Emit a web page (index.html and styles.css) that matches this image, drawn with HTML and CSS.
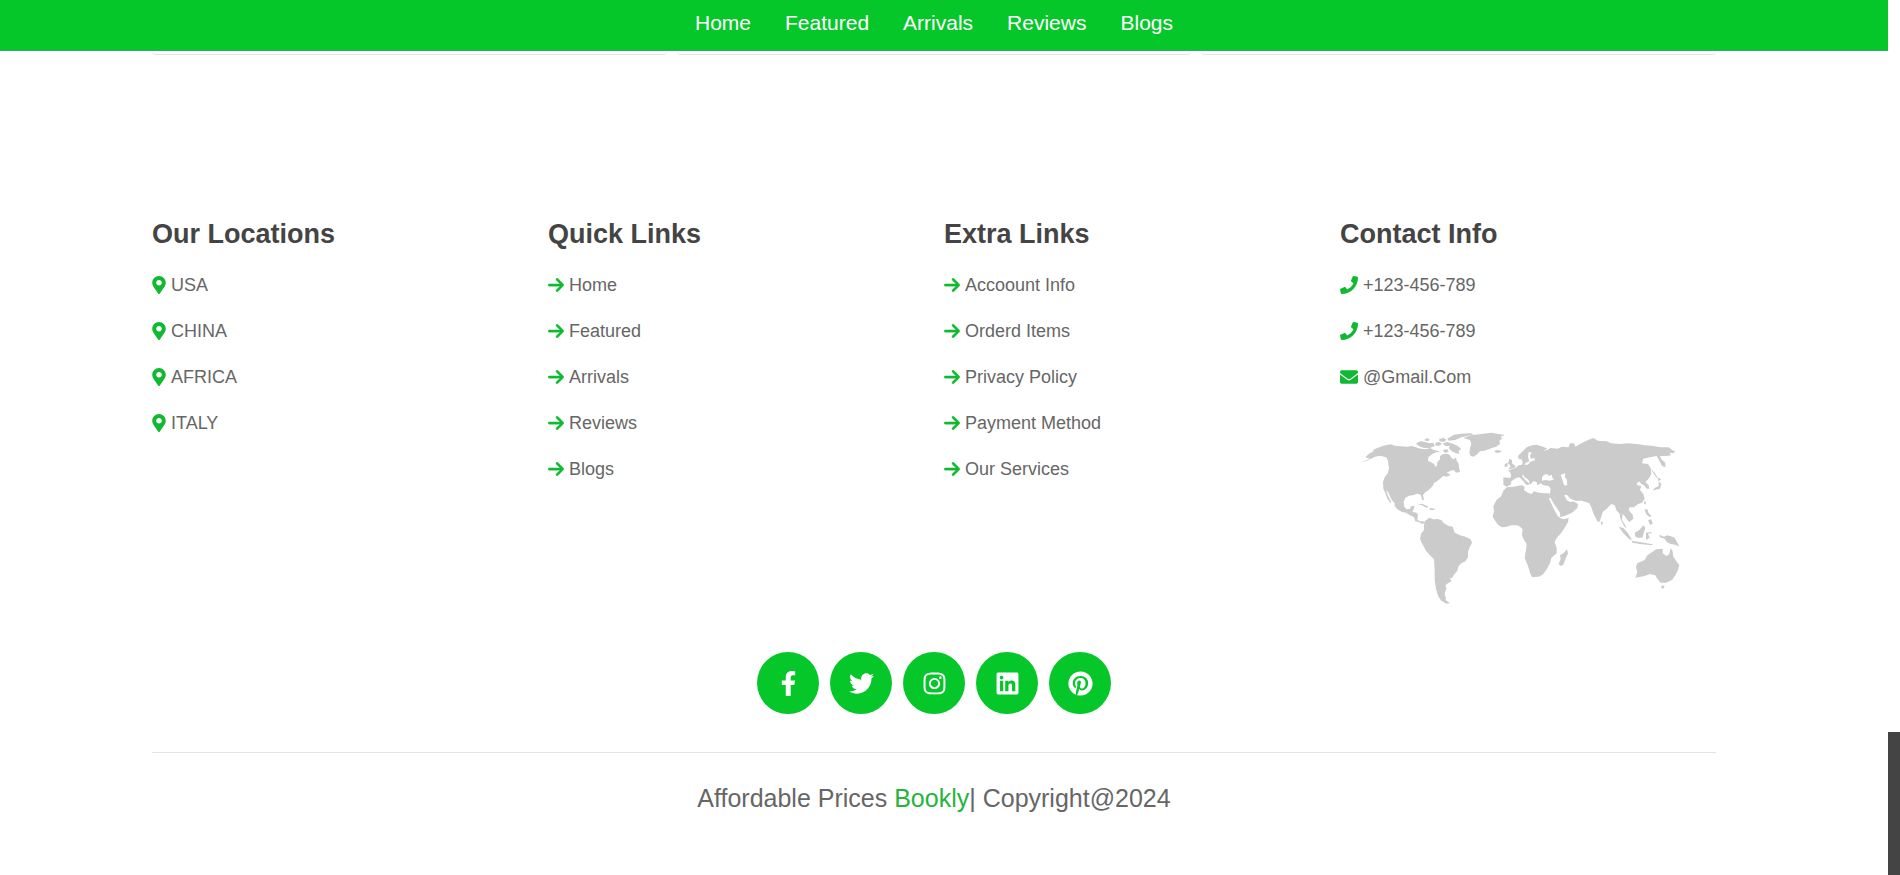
FILE: index.html
```html
<!DOCTYPE html>
<html lang="en">
<head>
    <meta charset="UTF-8">
    <meta name="viewport" content="width=device-width, initial-scale=1.0">
    <title>Bookly</title>
    <link rel="stylesheet" href="styles.css">
</head>
<body>
<!-- icons -->
<svg class="sprite" aria-hidden="true">
    <symbol id="marker" viewBox="0 0 384 512"><path d="M172.268 501.67C26.97 291.031 0 269.413 0 192 0 85.961 85.961 0 192 0s192 85.961 192 192c0 77.413-26.97 99.031-172.268 309.67-9.535 13.774-29.93 13.773-39.464 0zM192 272c44.183 0 80-35.817 80-80s-35.817-80-80-80-80 35.817-80 80 35.817 80 80 80z"/></symbol>
    <symbol id="arrow" viewBox="0 0 448 512"><path d="M438.6 278.6c12.5-12.5 12.5-32.8 0-45.3l-160-160c-12.5-12.5-32.8-12.5-45.3 0s-12.5 32.8 0 45.3L338.8 224 32 224c-17.7 0-32 14.3-32 32s14.3 32 32 32l306.7 0L233.4 393.4c-12.5 12.5-12.5 32.8 0 45.3s32.8 12.5 45.3 0l160-160z"/></symbol>
    <symbol id="phone" viewBox="0 0 512 512"><path d="M493.4 24.6l-104-24c-11.3-2.6-22.9 3.3-27.5 13.9l-48 112c-4.2 9.8-1.4 21.3 6.9 28l60.6 49.6c-36 76.7-98.9 140.5-177.2 177.2l-49.6-60.6c-6.8-8.3-18.2-11.1-28-6.9l-112 48C3.9 366.5-2 378.1.6 389.4l24 104C27.1 504.2 36.7 512 48 512c256.1 0 464-207.5 464-464 0-11.2-7.7-20.9-18.6-23.4z"/></symbol>
    <symbol id="envelope" viewBox="0 0 512 512"><path d="M502.3 190.8c3.9-3.1 9.7-.2 9.7 4.7V400c0 26.5-21.5 48-48 48H48c-26.5 0-48-21.5-48-48V195.6c0-5 5.7-7.8 9.7-4.7 22.4 17.4 52.1 39.5 154.1 113.6 21.1 15.4 56.7 47.8 92.2 47.6 35.7.3 72-32.8 92.3-47.6 102-74.1 131.6-96.3 154-113.7zM256 320c23.2.4 56.6-29.2 73.4-41.4 132.7-96.3 142.8-104.7 173.4-128.7 5.8-4.5 9.2-11.5 9.2-18.9v-19c0-26.5-21.5-48-48-48H48c-26.5 0-48 21.5-48 48v19c0 7.4 3.4 14.3 9.2 18.9 30.6 23.9 40.7 32.4 173.4 128.7 16.8 12.2 50.2 41.8 73.4 41.4z"/></symbol>
    <symbol id="facebook" viewBox="0 0 320 512"><path d="M279.14 288l14.22-92.66h-88.91v-60.13c0-25.35 12.42-50.06 52.24-50.06h40.42V6.26S260.43 0 225.36 0c-73.22 0-121.08 44.38-121.08 124.72v70.62H22.89V288h81.39v224h100.17V288z"/></symbol>
    <symbol id="twitter" viewBox="0 0 512 512"><path d="M459.37 151.716c.325 4.548.325 9.097.325 13.645 0 138.72-105.583 298.558-298.558 298.558-59.452 0-114.68-17.219-161.137-47.106 8.447.974 16.568 1.299 25.34 1.299 49.055 0 94.213-16.568 130.274-44.832-46.132-.975-84.792-31.188-98.112-72.772 6.498.974 12.995 1.624 19.818 1.624 9.421 0 18.843-1.3 27.614-3.573-48.081-9.747-84.143-51.98-84.143-102.985v-1.299c13.969 7.797 30.214 12.67 47.431 13.319-28.264-18.843-46.781-51.005-46.781-87.391 0-19.492 5.197-37.36 14.294-52.954 51.655 63.675 129.3 105.258 216.365 109.807-1.624-7.797-2.599-15.918-2.599-24.04 0-57.828 46.782-104.934 104.934-104.934 30.213 0 57.502 12.67 76.67 33.137 23.715-4.548 46.456-13.32 66.599-25.34-7.798 24.366-24.366 44.833-46.132 57.827 21.117-2.273 41.584-8.122 60.426-16.243-14.292 20.791-32.161 39.308-52.628 54.253z"/></symbol>
    <symbol id="instagram" viewBox="0 0 448 512"><path d="M224.1 141c-63.6 0-114.9 51.3-114.9 114.9s51.3 114.9 114.9 114.9S339 319.5 339 255.9 287.7 141 224.1 141zm0 189.6c-41.1 0-74.7-33.5-74.7-74.7s33.5-74.7 74.7-74.7 74.7 33.5 74.7 74.7-33.6 74.7-74.7 74.7zm146.4-194.3c0 14.9-12 26.8-26.8 26.8-14.9 0-26.8-12-26.8-26.8s12-26.8 26.8-26.8 26.8 12 26.8 26.8zm76.1 27.2c-1.7-35.9-9.9-67.7-36.2-93.9-26.2-26.2-58-34.4-93.9-36.2-37-2.1-147.9-2.1-184.9 0-35.8 1.7-67.6 9.9-93.9 36.1s-34.4 58-36.2 93.9c-2.1 37-2.1 147.9 0 184.9 1.7 35.9 9.9 67.7 36.2 93.9s58 34.4 93.9 36.2c37 2.1 147.9 2.1 184.9 0 35.9-1.7 67.7-9.9 93.9-36.2 26.2-26.2 34.4-58 36.2-93.9 2.1-37 2.1-147.8 0-184.8zM398.8 388c-7.8 19.6-22.9 34.7-42.6 42.6-29.5 11.7-99.5 9-132.1 9s-102.7 2.6-132.1-9c-19.6-7.8-34.7-22.9-42.6-42.6-11.7-29.5-9-99.5-9-132.1s-2.6-102.7 9-132.1c7.8-19.6 22.9-34.7 42.6-42.6 29.5-11.7 99.5-9 132.1-9s102.7-2.6 132.1 9c19.6 7.8 34.7 22.9 42.6 42.6 11.7 29.5 9 99.5 9 132.1s2.7 102.7-9 132.1z"/></symbol>
    <symbol id="linkedin" viewBox="0 0 448 512"><path d="M416 32H31.9C14.3 32 0 46.5 0 64.3v383.4C0 465.5 14.3 480 31.9 480H416c17.6 0 32-14.5 32-32.3V64.3c0-17.8-14.4-32.3-32-32.3zM135.4 416H69V202.2h66.5V416zm-33.2-243c-21.3 0-38.5-17.3-38.5-38.5S80.9 96 102.2 96c21.2 0 38.5 17.3 38.5 38.5 0 21.3-17.2 38.5-38.5 38.5zm282.1 243h-66.4V312c0-24.8-.5-56.7-34.5-56.7-34.6 0-39.9 27-39.9 54.9V416h-66.4V202.2h63.7v29.2h.9c8.9-16.8 30.6-34.5 62.9-34.5 67.2 0 79.7 44.3 79.7 101.9V416z"/></symbol>
    <symbol id="pinterest" viewBox="0 0 496 512"><path d="M496 256c0 137-111 248-248 248-25.6 0-50.2-3.9-73.4-11.1 10.1-16.5 25.2-43.5 30.8-65 3-11.6 15.4-59 15.4-59 8.1 15.4 31.7 28.5 56.8 28.5 74.8 0 128.7-68.8 128.7-154.3 0-81.9-66.9-143.2-152.9-143.2-107 0-163.9 71.8-163.9 150.1 0 36.4 19.4 81.7 50.3 96.1 4.7 2.2 7.2 1.2 8.3-3.3.8-3.4 5-20.3 6.9-28.1.6-2.5.3-4.7-1.7-7.1-10.1-12.5-18.3-35.3-18.3-56.6 0-54.7 41.4-107.6 112-107.6 60.9 0 103.6 41.5 103.6 100.9 0 67.1-33.9 113.6-78 113.6-24.3 0-42.6-20.1-36.7-44.8 7-29.5 20.5-61.3 20.5-82.6 0-19-10.2-34.9-31.4-34.9-24.9 0-44.9 25.7-44.9 60.2 0 22 7.4 36.8 7.4 36.8s-24.5 103.8-29 123.2c-5 21.4-3 51.6-.9 71.2C65.4 450.9 0 361.1 0 256 0 119 111 8 248 8s248 111 248 248z"/></symbol>
</svg>

<nav class="navbar">
    <a href="#home">Home</a>
    <a href="#featured">Featured</a>
    <a href="#arrivals">Arrivals</a>
    <a href="#reviews">Reviews</a>
    <a href="#blogs">Blogs</a>
</nav>

<!-- bottom of the blog cards -->
<section class="blogs" id="blogs">
    <div class="card"></div>
    <div class="card"></div>
    <div class="card"></div>
</section>

<footer class="footer">
    <div class="box-container">
        <div class="box">
            <h3>Our Locations</h3>
            <a href="#"><svg class="icon narrow"><use href="#marker"/></svg>USA</a>
            <a href="#"><svg class="icon narrow"><use href="#marker"/></svg>CHINA</a>
            <a href="#"><svg class="icon narrow"><use href="#marker"/></svg>AFRICA</a>
            <a href="#"><svg class="icon narrow"><use href="#marker"/></svg>ITALY</a>
        </div>
        <div class="box">
            <h3>Quick Links</h3>
            <a href="#"><svg class="icon medium"><use href="#arrow"/></svg>Home</a>
            <a href="#"><svg class="icon medium"><use href="#arrow"/></svg>Featured</a>
            <a href="#"><svg class="icon medium"><use href="#arrow"/></svg>Arrivals</a>
            <a href="#"><svg class="icon medium"><use href="#arrow"/></svg>Reviews</a>
            <a href="#"><svg class="icon medium"><use href="#arrow"/></svg>Blogs</a>
        </div>
        <div class="box">
            <h3>Extra Links</h3>
            <a href="#"><svg class="icon medium"><use href="#arrow"/></svg>Accoount Info</a>
            <a href="#"><svg class="icon medium"><use href="#arrow"/></svg>Orderd Items</a>
            <a href="#"><svg class="icon medium"><use href="#arrow"/></svg>Privacy Policy</a>
            <a href="#"><svg class="icon medium"><use href="#arrow"/></svg>Payment Method</a>
            <a href="#"><svg class="icon medium"><use href="#arrow"/></svg>Our Services</a>
        </div>
        <div class="box">
            <h3>Contact Info</h3>
            <a href="#"><svg class="icon"><use href="#phone"/></svg>+123-456-789</a>
            <a href="#"><svg class="icon"><use href="#phone"/></svg>+123-456-789</a>
            <a href="#"><svg class="icon"><use href="#envelope"/></svg>@Gmail.Com</a>
            <svg class="map" viewBox="-30 0 1128 600" role="img" aria-label="World map">
                <!-- north america -->
                <path d="M26 130L48 121 60 116 46 112 56 102 72 93 68 90 84 83 100 77 122 73 134 77 152 79 172 80 184 78 198 82 212 86 228 88 240 84 252 90 262 92 270 96 258 97 246 103 235 112 234 122 246 128 252 132 256 140 261 138 262 126 270 118 270 108 280 102 292 101 300 106 304 114 312 118 318 112 320 122 326 132 327 142 330 156 318 158 312 150 302 152 290 158 298 162 302 165 290 170 280 168 270 176 258 186 252 188 248 198 236 210 224 218 219 226 222 240 217 240 212 224 200 221 192 225 178 227 166 233 161 246 163 260 170 268 180 266 184 258 194 258 190 270 187 276 200 278 204 284 202 298 208 304 220 304 226 308 216 312 206 306 196 304 192 292 180 286 168 278 156 276 142 268 134 258 134 250 124 238 114 216 108 210 114 228 124 246 122 250 112 236 106 220 100 206 99 186 104 172 114 158 117 144 114 124 110 113 98 109 84 108 72 112 56 120z"/>
                <!-- arctic islands -->
                <path d="M198 70L212 64 226 66 238 70 250 68 254 78 240 84 222 84 206 78zM222 60L232 54 240 60 232 64zM268 56L282 54 290 60 280 66 268 64zM256 68L268 66 276 72 266 78 256 76zM278 70L292 66 310 72 324 78 334 88 326 92 328 102 314 98 304 92 296 84 300 78 286 78zM278 90L292 88 296 96 284 98zM292 56L312 44 334 41 362 40 372 43 350 48 334 52 316 60 296 62z"/>
                <!-- greenland, iceland -->
                <path d="M340 54L362 46 394 42 424 38 464 45 452 50 456 56 448 62 450 72 438 80 420 86 404 92 390 94 380 104 370 110 362 108 358 98 360 84 364 72 360 60zM432 93L442 90 456 93 448 98 438 98z"/>
                <!-- caribbean -->
                <path d="M203 253L216 251 236 260 230 263 216 256zM240 264L256 266 250 270 238 269z"/>
                <!-- south america -->
                <path d="M224 304L238 293 250 298 262 297 274 300 282 310 296 318 308 320 314 338 330 346 346 350 362 358 366 368 358 384 354 396 354 412 346 424 334 430 326 438 322 452 312 464 306 474 300 474 304 484 294 490 286 496 290 506 286 512 284 524 288 534 286 540 300 549 290 551 274 542 264 528 258 506 254 480 254 450 252 418 240 406 228 392 216 370 210 356 214 340 222 330 222 316z"/>
                <!-- africa -->
                <path d="M470 202L490 200 516 196 524 200 522 210 534 218 544 222 552 214 566 218 584 220 598 220 602 238 612 260 622 276 630 294 640 298 656 294 654 306 646 320 634 338 620 354 614 366 620 384 620 400 604 414 600 430 590 448 578 464 566 470 546 472 540 458 534 438 524 414 528 390 530 372 522 360 516 346 518 328 512 322 502 316 484 316 470 320 456 322 444 314 434 300 428 290 432 274 430 258 440 240 454 228 460 212zM651 388L654 400 646 418 640 434 632 438 626 432 632 416 630 406 640 400z"/>
                <!-- europe and asia -->
                <path d="M460 172L480 174 484 166 480 156 474 152 484 148 496 144 506 136 516 134 518 126 514 118 506 116 504 108 518 94 530 82 546 76 560 74 580 80 592 86 580 92 592 90 602 84 622 86 636 80 656 82 660 70 672 70 676 80 690 72 706 64 720 58 730 54 744 62 770 64 784 70 810 72 832 70 860 72 884 76 910 78 932 82 956 82 966 90 976 94 970 100 958 98 964 106 948 108 930 108 934 118 946 128 946 142 936 138 928 122 920 108 900 112 880 116 876 130 894 132 902 144 904 162 896 176 886 186 896 196 898 206 890 206 882 196 874 192 868 184 860 190 862 196 874 198 870 210 880 222 884 236 876 248 864 252 852 262 838 262 836 270 848 284 850 296 838 306 832 300 824 288 818 282 816 300 826 316 830 326 822 318 812 298 808 280 800 272 794 256 784 252 770 266 758 276 754 290 748 306 742 304 730 280 724 262 718 250 708 246 694 242 676 242 662 236 650 224 642 226 652 242 662 246 670 244 684 252 682 264 666 278 644 288 630 292 618 270 606 248 598 234 600 220 602 206 596 198 580 196 572 190 562 196 560 186 550 184 540 194 536 180 524 172 520 164 516 168 528 182 540 192 530 196 520 184 508 172 498 174 484 184 482 194 470 200 460 194z"/>
                <!-- british isles -->
                <path d="M478 116L486 120 486 130 496 138 494 144 474 148 482 138 474 130zM464 132L472 128 474 138 464 142z"/>
                <!-- baltic, black, caspian and red seas -->
                <path class="sea" d="M536 96L546 98 540 106 542 116 552 114 556 120 540 126 534 134 522 134 528 128 538 124 534 112zM576 172L582 164 592 162 596 168 606 164 606 172 612 178 600 182 588 180 576 182zM632 164L646 160 644 170 650 178 652 196 642 196 638 182zM596 234L602 234 612 252 630 278 631 290 624 290 612 268z"/>
                <!-- asian islands -->
                <path d="M902 146L914 158 922 172 920 174 908 156zM922 172L934 178 926 184zM926 184L934 192 930 206 914 210 908 212 914 204 926 198zM884 242L888 246 886 254 882 250zM884 268L892 268 896 280 904 288 900 292 890 284 886 276zM894 300L904 298 908 312 900 314zM752 302L760 310 754 316zM806 320L820 324 834 340 846 360 838 358 822 342zM844 362L868 366 908 373 906 376 870 372 848 368zM854 338L868 330 880 316 886 324 882 336 878 352 866 354 856 350zM888 338L906 336 904 340 894 341 900 356 894 354 892 360 888 356z"/>
                <!-- new guinea, australia -->
                <path d="M928 344L942 350 952 346 972 352 980 364 988 380 976 374 962 372 950 366 944 356 930 352zM862 430L884 420 892 406 910 394 918 388 938 386 938 400 950 408 958 402 962 384 968 394 970 410 978 422 988 436 984 450 976 466 966 480 948 488 932 488 922 476 916 466 900 462 884 468 864 472 856 474 862 456 858 440zM934 497L944 497 940 506 934 504z"/>
            </svg>
        </div>
    </div>

    <div class="share">
        <a href="#" aria-label="Facebook"><svg><use href="#facebook"/></svg></a>
        <a href="#" aria-label="Twitter"><svg><use href="#twitter"/></svg></a>
        <a href="#" aria-label="Instagram"><svg><use href="#instagram"/></svg></a>
        <a href="#" aria-label="LinkedIn"><svg><use href="#linkedin"/></svg></a>
        <a href="#" aria-label="Pinterest"><svg><use href="#pinterest"/></svg></a>
    </div>

    <div class="credit">Affordable Prices <span>Bookly</span>| Copyright@2024</div>
</footer>

<div class="scroll-thumb"></div>
</body>
</html>
```

FILE: styles.css
```css
*{
    margin: 0;
    padding: 0;
    box-sizing: border-box;
}
body{
    font-family: "Liberation Sans", Arial, sans-serif;
    background: #fff;
    padding-right: 12px; /* room for the scrollbar */
}
a{
    text-decoration: none;
}
.sprite{
    display: none;
}
.navbar{
    display: flex;
    justify-content: center;
    gap: 34px;
    padding: 11px 20px 15px 0;
    background: #06c729;
    border-bottom: 1px solid #27ae60;
}
.navbar a{
    color: #fff;
    font-size: 21px;
    line-height: 24px;
}
.blogs{
    display: grid;
    grid-template-columns: repeat(3, 1fr);
    gap: 10px;
    padding: 0 172px 0 152px;
}
.blogs .card{
    height: 4px;
    border-bottom: 1px solid #e3e3e3;
    border-radius: 0 0 5px 5px;
}
.footer{
    padding: 161px 172px 0 152px;
}
.box-container{
    display: grid;
    grid-template-columns: repeat(auto-fit, minmax(300px, 1fr));
    gap: 20px;
}
.box h3{
    color: #444;
    font-size: 27px;
    line-height: 36px;
    padding-bottom: 10px;
}
.box a{
    display: flex;
    align-items: center;
    color: #666;
    font-size: 18px;
    line-height: 26px;
    padding: 10px 0;
}
.icon{
    width: 18px;
    height: 18px;
    margin-right: 5px;
    fill: #10b931;
}
.icon.narrow{
    width: 14px;
}
.icon.medium{
    width: 16px;
    stroke: #10b931;
    stroke-width: 12px;
}
.map{
    display: block;
    width: 100%;
    margin-top: 20px;
    fill: #cbcbcb;
}
.map .sea{
    fill: #fff;
}
.share{
    display: flex;
    justify-content: center;
    gap: 11px;
    padding: 32px 0 38px;
}
.share a{
    display: flex;
    align-items: center;
    justify-content: center;
    width: 62px;
    height: 62px;
    border-radius: 50%;
    background: #06c729;
}
.share svg{
    width: 25px;
    height: 25px;
    fill: #fff;
}
.credit{
    border-top: 1px solid #e3e3e3;
    padding: 29px 0;
    text-align: center;
    color: #666;
    font-size: 25px;
    line-height: 32px;
}
.credit span{
    color: #27b33c;
}
.scroll-thumb{
    position: fixed;
    right: 0;
    bottom: 0;
    width: 12px;
    height: 143px;
    background: #444;
}
```
